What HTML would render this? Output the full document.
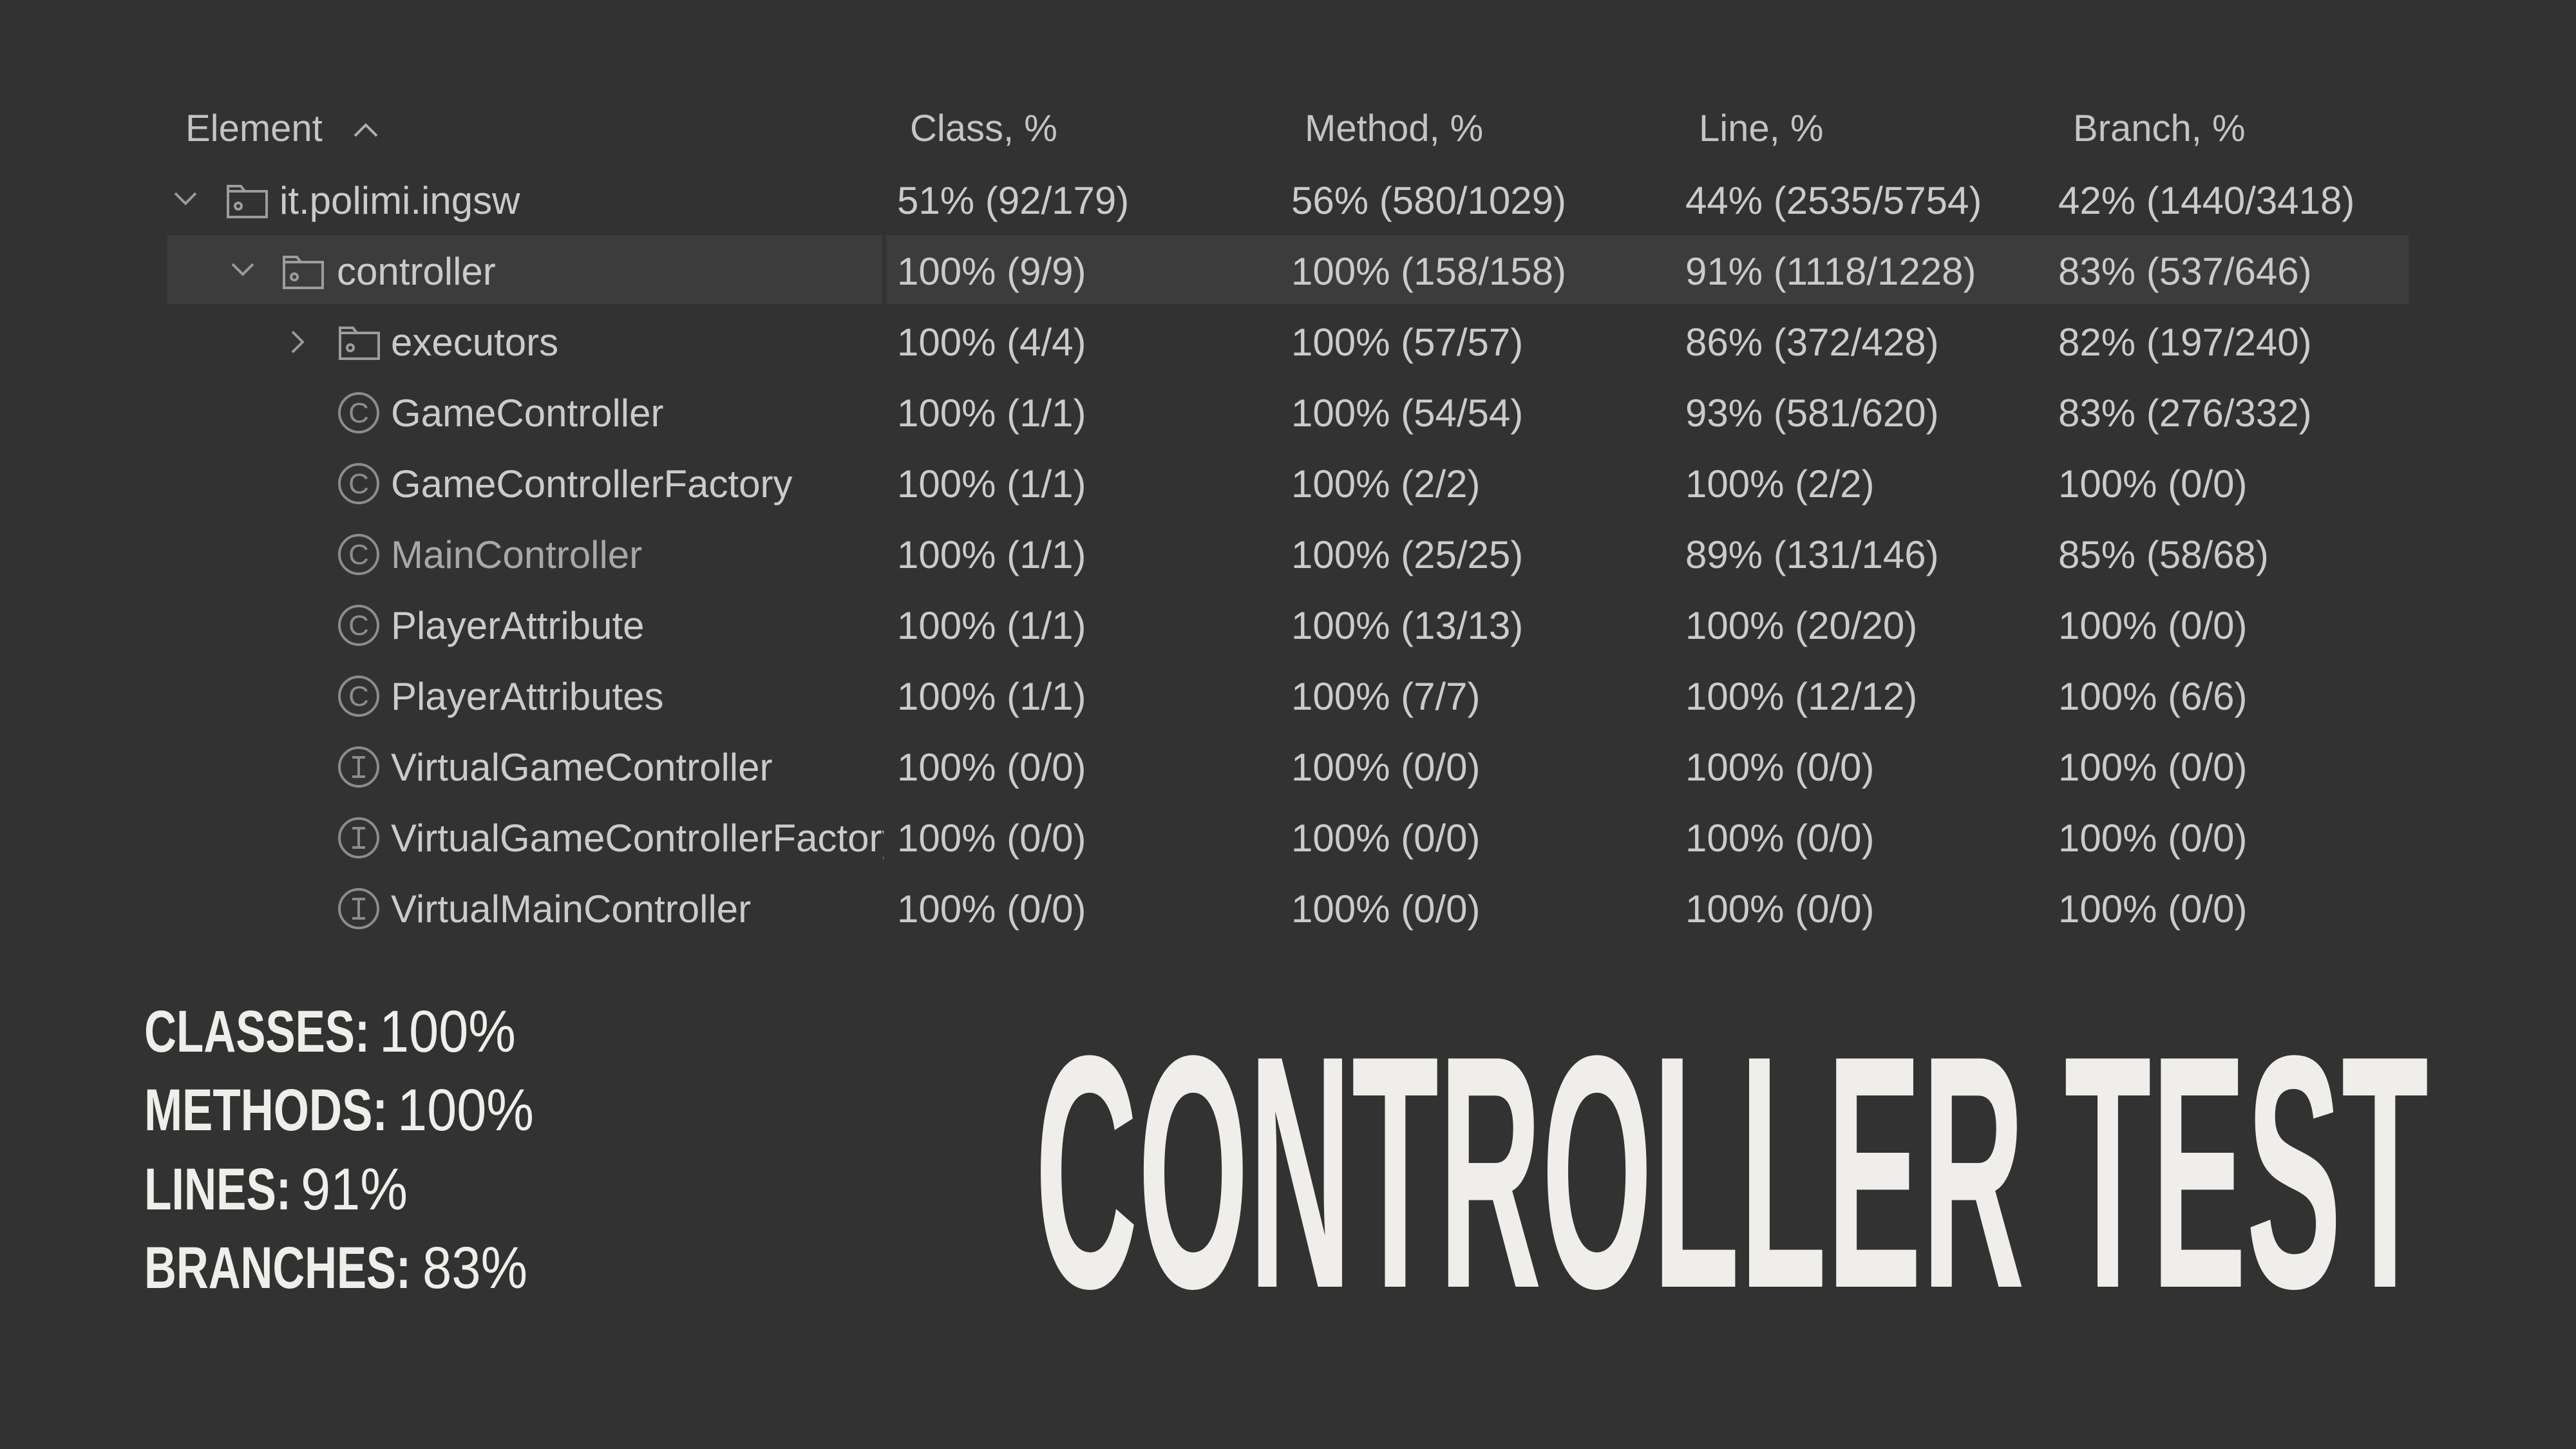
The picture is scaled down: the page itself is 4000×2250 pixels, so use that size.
<!DOCTYPE html>
<html><head><meta charset="utf-8"><style>
html,body{margin:0;padding:0;background:#323232;}
svg{display:block}
</style></head><body>
<svg width="4000" height="2250" viewBox="0 0 4000 2250" xmlns="http://www.w3.org/2000/svg" font-family="Liberation Sans, sans-serif">
<rect width="4000" height="2250" fill="#323232"/>
<defs><clipPath id="nc"><rect x="0" y="0" width="1372" height="2250"/></clipPath></defs>
<!-- highlight row -->
<rect x="260" y="365" width="1110" height="107" fill="#3c3c3c"/>
<rect x="1376" y="365" width="2364" height="107" fill="#3c3c3c"/>
<g fill="#c4c4c4" font-size="58">
<text x="288" y="219">Element</text>
<polyline points="551,211 568,194 585,211" fill="none" stroke="#b0b0b0" stroke-width="4"/>
<text x="1413" y="219">Class, %</text>
<text x="2026" y="219">Method, %</text>
<text x="2638" y="219">Line, %</text>
<text x="3219" y="219">Branch, %</text>
</g>
<g fill="none" stroke="#9a9a9a" stroke-width="4">
<polyline points="272,300 288,316 304,300"/>
<polyline points="361,410 377,426 393,410"/>
<polyline points="454,515 470,531 454,547"/>
</g>
<g fill="none" stroke="#9c9c9c" stroke-width="4">
<path d="M354,289 h20 l6,8 h34 v40 h-60 z M354,297 h26"/>
<circle cx="370" cy="320" r="5"/>
<path d="M441,399 h20 l6,8 h34 v40 h-60 z M441,407 h26"/>
<circle cx="457" cy="430" r="5"/>
<path d="M528,509 h20 l6,8 h34 v40 h-60 z M528,517 h26"/>
<circle cx="544" cy="540" r="5"/>
</g>
<g fill="none" stroke="#8c8c8c" stroke-width="4">
<circle cx="557" cy="641" r="30"/><circle cx="557" cy="751" r="30"/><circle cx="557" cy="861" r="30"/>
<circle cx="557" cy="971" r="30"/><circle cx="557" cy="1081" r="30"/>
<circle cx="557" cy="1191" r="30"/><circle cx="557" cy="1301" r="30"/><circle cx="557" cy="1411" r="30"/>
<path d="M547,1176 h20 M557,1176 v30 M547,1206 h20 M547,1286 h20 M557,1286 v30 M547,1316 h20 M547,1396 h20 M557,1396 v30 M547,1426 h20"/>
</g>
<g fill="#8c8c8c" font-size="44" text-anchor="middle">
<text x="557" y="656">C</text><text x="557" y="766">C</text><text x="557" y="876">C</text><text x="557" y="986">C</text><text x="557" y="1096">C</text>
</g>
<g fill="#cbcbcb" font-size="60" clip-path="url(#nc)">
<text x="434" y="332">it.polimi.ingsw</text>
<text x="523" y="442">controller</text>
<text x="607" y="552">executors</text>
<text x="607" y="662">GameController</text>
<text x="607" y="772">GameControllerFactory</text>
<text x="607" y="882" fill="#a8a8a8">MainController</text>
<text x="607" y="992">PlayerAttribute</text>
<text x="607" y="1102">PlayerAttributes</text>
<text x="607" y="1212">VirtualGameController</text>
<text x="607" y="1322">VirtualGameControllerFactory</text>
<text x="607" y="1432">VirtualMainController</text>
</g>
<g fill="#cbcbcb" font-size="60">
<text x="1393" y="332">51% (92/179)</text><text x="2005" y="332">56% (580/1029)</text><text x="2617" y="332">44% (2535/5754)</text><text x="3196" y="332">42% (1440/3418)</text>
<text x="1393" y="442">100% (9/9)</text><text x="2005" y="442">100% (158/158)</text><text x="2617" y="442">91% (1118/1228)</text><text x="3196" y="442">83% (537/646)</text>
<text x="1393" y="552">100% (4/4)</text><text x="2005" y="552">100% (57/57)</text><text x="2617" y="552">86% (372/428)</text><text x="3196" y="552">82% (197/240)</text>
<text x="1393" y="662">100% (1/1)</text><text x="2005" y="662">100% (54/54)</text><text x="2617" y="662">93% (581/620)</text><text x="3196" y="662">83% (276/332)</text>
<text x="1393" y="772">100% (1/1)</text><text x="2005" y="772">100% (2/2)</text><text x="2617" y="772">100% (2/2)</text><text x="3196" y="772">100% (0/0)</text>
<text x="1393" y="882">100% (1/1)</text><text x="2005" y="882">100% (25/25)</text><text x="2617" y="882">89% (131/146)</text><text x="3196" y="882">85% (58/68)</text>
<text x="1393" y="992">100% (1/1)</text><text x="2005" y="992">100% (13/13)</text><text x="2617" y="992">100% (20/20)</text><text x="3196" y="992">100% (0/0)</text>
<text x="1393" y="1102">100% (1/1)</text><text x="2005" y="1102">100% (7/7)</text><text x="2617" y="1102">100% (12/12)</text><text x="3196" y="1102">100% (6/6)</text>
<text x="1393" y="1212">100% (0/0)</text><text x="2005" y="1212">100% (0/0)</text><text x="2617" y="1212">100% (0/0)</text><text x="3196" y="1212">100% (0/0)</text>
<text x="1393" y="1322">100% (0/0)</text><text x="2005" y="1322">100% (0/0)</text><text x="2617" y="1322">100% (0/0)</text><text x="3196" y="1322">100% (0/0)</text>
<text x="1393" y="1432">100% (0/0)</text><text x="2005" y="1432">100% (0/0)</text><text x="2617" y="1432">100% (0/0)</text><text x="3196" y="1432">100% (0/0)</text>
</g>
<g fill="#efeeea" font-size="92">
<text x="224" y="1633" font-weight="bold" textLength="350" lengthAdjust="spacingAndGlyphs">CLASSES:</text>
<text x="589" y="1633" textLength="212" lengthAdjust="spacingAndGlyphs">100%</text>
<text x="224" y="1755" font-weight="bold" textLength="378" lengthAdjust="spacingAndGlyphs">METHODS:</text>
<text x="617" y="1755" textLength="212" lengthAdjust="spacingAndGlyphs">100%</text>
<text x="224" y="1878" font-weight="bold" textLength="228" lengthAdjust="spacingAndGlyphs">LINES:</text>
<text x="467" y="1878" textLength="166" lengthAdjust="spacingAndGlyphs">91%</text>
<text x="224" y="2000" font-weight="bold" textLength="414" lengthAdjust="spacingAndGlyphs">BRANCHES:</text>
<text x="656" y="2000" textLength="163" lengthAdjust="spacingAndGlyphs">83%</text>
</g>
<text x="1607" y="1998" fill="#efeeea" font-size="515" font-weight="bold" textLength="2164" lengthAdjust="spacingAndGlyphs">CONTROLLER TEST</text>
</svg>
</body></html>
